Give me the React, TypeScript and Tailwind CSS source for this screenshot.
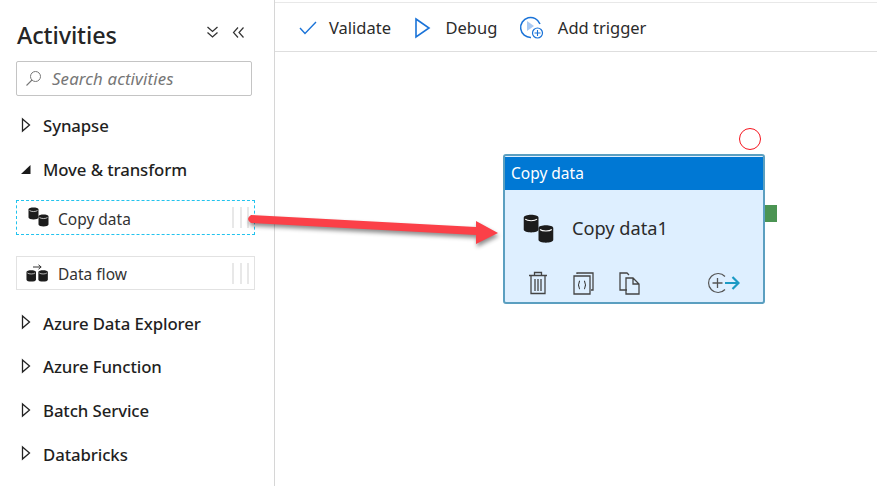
import React from "react";

const F = { fontFamily: '"Noto Sans","Open Sans",sans-serif' };

function Caret({ open }: { open?: boolean }) {
  return open ? (
    <svg width="12" height="12" viewBox="0 0 12 12" className="mb-[2px] shrink-0">
      <path d="M1 11 L10.5 11 L10.5 2 Z" fill="#1a1a1a" />
    </svg>
  ) : (
    <svg width="12" height="16" viewBox="0 0 12 16" className="mb-[2px] shrink-0">
      <path d="M2.5 2 L9.5 8 L2.5 14 Z" fill="none" stroke="#222" strokeWidth="1.3" />
    </svg>
  );
}

function Section({ label, open }: { label: string; open?: boolean }) {
  return (
    <div className="flex h-[43.7px] items-center">
      <div className="flex w-[43px] justify-start pl-[20px]">
        <Caret open={open} />
      </div>
      <span className="text-[16.8px] font-medium tracking-[-0.1px] text-[#1f1f1f]">{label}</span>
    </div>
  );
}

function Cyl({ x, y }: { x: number; y: number }) {
  return (
    <g transform={`translate(${x} ${y})`}>
      <path d="M0 2 C0 -0.6 10 -0.6 10 2 L10 10 C10 12.6 0 12.6 0 10 Z" fill="#1c1c1c" />
      <path d="M1 3 C2.5 4.4 7.5 4.4 9 3" fill="none" stroke="#fff" strokeWidth="0.7" />
    </g>
  );
}

function CopyIcon({ size }: { size: number }) {
  return (
    <svg width={size} height={size} viewBox="0 0 21 21" className="shrink-0">
      <Cyl x={0.5} y={0.5} />
      <Cyl x={10.5} y={7.5} />
    </svg>
  );
}

function FlowIcon() {
  return (
    <svg width="23" height="19" viewBox="0 0 23 19" className="shrink-0">
      <g transform="translate(0 -1) scale(0.95)"><Cyl x={0.5} y={7.5} /><Cyl x={13} y={7.5} /></g>
      <path d="M7 3 H15 M12.5 0.8 L15.2 3 L12.5 5.2" fill="none" stroke="#333" strokeWidth="1" />
    </svg>
  );
}

function Grip() {
  return (
    <div className="ml-auto mr-[5px] flex h-[21px] items-center gap-[5.5px]">
      <div className="h-full w-[2px] bg-[#e8e8e8]" />
      <div className="h-full w-[2px] bg-[#e8e8e8]" />
      <div className="h-full w-[2px] bg-[#e8e8e8]" />
    </div>
  );
}

export default function App() {
  return (
    <div className="relative flex h-[486px] w-[877px] overflow-hidden bg-white" style={F}>
      <aside className="flex h-full w-[275px] shrink-0 flex-col border-r border-[#d6d6d6]">
        <div className="flex h-[61px] items-start pl-[17px] pt-[18px]">
          <h1 className="text-[23.4px] font-medium leading-[34px] tracking-[-0.1px] text-[#252525]">Activities</h1>
          <div className="ml-auto mr-[29px] mt-[7px] flex items-center gap-[13px]">
            <svg width="13" height="14" viewBox="0 0 13 14">
              <path d="M1.5 2 L6.5 6.5 L11.5 2 M1.5 7.5 L6.5 12 L11.5 7.5" fill="none" stroke="#333" strokeWidth="1.3" />
            </svg>
            <svg width="13" height="13" viewBox="0 0 13 13">
              <path d="M6 1.5 L1.5 6.5 L6 11.5 M11.5 1.5 L7 6.5 L11.5 11.5" fill="none" stroke="#333" strokeWidth="1.2" />
            </svg>
          </div>
        </div>
        <div className="ml-[16px] flex h-[35px] w-[236px] items-center rounded-[2px] border border-[#c4c4c4] pl-[8px]">
          <svg width="17" height="17" viewBox="0 0 17 17" className="shrink-0">
            <circle cx="10.5" cy="6.5" r="5" fill="none" stroke="#777" strokeWidth="1" />
            <path d="M7 10 L1.5 15.5" stroke="#777" strokeWidth="1.1" />
          </svg>
          <span className="ml-[10px] pt-px text-[16.8px] italic tracking-[0.15px] text-[#767676]">Search activities</span>
        </div>
        <div className="mt-[8px]">
          <Section label="Synapse" />
          <Section label="Move & transform" open />
        </div>
        <div className="ml-[16px] mt-[9px] flex h-[35px] w-[239px] items-center self-start border border-dashed border-[#22c3ee] pl-[11px]">
          <CopyIcon size={21} />
          <span className="ml-[9px] pt-[3px] text-[15.5px] text-[#333]">Copy data</span>
          <Grip />
        </div>
        <div className="ml-[16px] mt-[21px] flex h-[34px] w-[239px] items-center self-start border border-[#e2e2e2] pl-[9px]">
          <FlowIcon />
          <span className="ml-[9px] pt-[2px] text-[15.5px] text-[#333]">Data flow</span>
          <Grip />
        </div>
        <div className="mt-[11px]">
          <Section label="Azure Data Explorer" />
          <Section label="Azure Function" />
          <Section label="Batch Service" />
          <Section label="Databricks" />
        </div>
      </aside>

      <main className="relative min-w-0 flex-1">
        <div className="mt-[2px] flex h-[50px] items-center border-b border-t border-b-[#dedede] border-t-[#e8e8e8] pl-[24px] pt-[2px] text-[16.5px] text-[#2b2b2b]">
          <svg width="18" height="14" viewBox="0 0 18 14">
            <path d="M1 7 L6 12.5 L17 1" fill="none" stroke="#1a73d8" strokeWidth="1.4" />
          </svg>
          <span className="ml-[12px] pt-px">Validate</span>
          <svg width="17" height="22" viewBox="0 0 17 22" className="ml-[22.5px]">
            <path d="M2 2 L15 11 L2 20 Z" fill="none" stroke="#1a73d8" strokeWidth="1.6" />
          </svg>
          <span className="ml-[15px] pt-px">Debug</span>
          <svg width="26" height="26" viewBox="0 0 26 26" className="ml-[21.5px]">
            <path d="M13 13 m-1 9.5 A10 10 0 1 1 21 9" fill="none" stroke="#1a73d8" strokeWidth="1.5" />
            <path d="M8 6 L15 11 L8 16 Z" fill="#a9c9f2" />
            <circle cx="18.5" cy="18" r="5" fill="#fff" stroke="#1a73d8" strokeWidth="1.2" />
            <path d="M15.5 18 H21.5 M18.5 15 V21" stroke="#1a73d8" strokeWidth="1.1" />
          </svg>
          <span className="ml-[13px] pt-px">Add trigger</span>
        </div>
      </main>

      {/* canvas node */}
      <div className="absolute left-[739px] top-[128px] h-[22px] w-[22px] rounded-full border-[1.5px] border-[#f5141e]" />
      <div className="absolute left-[764px] top-[205px] h-[17px] w-[13px] bg-[#4b9453]" />
      <div className="absolute left-[503px] top-[154px] flex h-[150px] w-[262px] flex-col overflow-hidden rounded-[3px] border-2 border-[#5b9fc0] bg-[#deefff]">
        <div className="mt-px flex h-[33px] items-center bg-[#0078d4] pl-[6px] pt-px text-[15.5px] text-white">Copy data</div>
        <div className="flex h-[76px] items-center pl-[18px] pt-[2px]">
          <CopyIcon size={31} />
          <span className="ml-[18px] text-[18.2px] text-[#2b2b2b]">Copy data1</span>
        </div>
        <div className="flex flex-1 items-center pb-[2px] pl-[23px]">
          <svg width="20" height="24" viewBox="0 0 20 24">
            <path d="M1 4.5 H19 M6.5 4 V1.5 H13.5 V4 M3 5 V22.5 H17 V5 M7 8 V20 M10 8 V20 M13 8 V20" fill="none" stroke="#444" strokeWidth="1.3" />
          </svg>
          <svg width="21" height="23" viewBox="0 0 21 23" className="ml-[25px]">
            <path d="M4 2 V1 H20 V18 H18 M1 4 H17 V22 H1 Z" fill="none" stroke="#444" strokeWidth="1.3" />
            <path d="M7 9 C5.5 9 6.5 13 5 13 C6.5 13 5.5 17 7 17 M11 9 C12.5 9 11.5 13 13 13 C11.5 13 12.5 17 11 17" fill="none" stroke="#333" strokeWidth="1.1" />
          </svg>
          <svg width="21" height="23" viewBox="0 0 21 23" className="ml-[25px]">
            <path d="M8 18 H1 V1 H8 L10 3 M7 6 H14 L20 12 V22 H7 Z M14 6 V12 H20" fill="none" stroke="#444" strokeWidth="1.3" />
          </svg>
          <svg width="34" height="22" viewBox="0 0 34 22" className="ml-[66px]">
            <path d="M19 17.5 A9.5 9.5 0 1 1 19 4.5" fill="none" stroke="#555" strokeWidth="1.2" />
            <path d="M6.5 11 H16.5 M11.5 6 V16" stroke="#555" strokeWidth="1.3" />
            <path d="M19 11 H32 M26.5 5 L32.5 11 L26.5 17" fill="none" stroke="#1b9ac4" strokeWidth="2.2" />
          </svg>
        </div>
      </div>

      {/* annotation arrow */}
      <svg className="absolute left-[240px] top-[205px] drop-shadow-[1px_3px_2px_rgba(0,0,0,0.45)]" width="270" height="50" viewBox="0 0 270 50">
        <path d="M11 10 L236 22 L236 16 L258 28 L236 39 L236 30 L11 18 Q5 14 11 10 Z" fill="#fb4048" />
      </svg>
    </div>
  );
}
